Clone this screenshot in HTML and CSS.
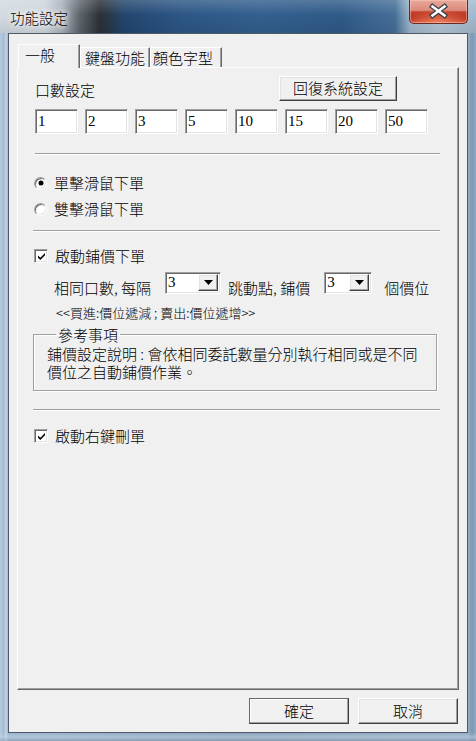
FILE: index.html
```html
<!DOCTYPE html>
<html lang="zh-Hant">
<head>
<meta charset="utf-8">
<title>功能設定</title>
<link rel="stylesheet" href="styles.css">
</head>
<body>
<div class="window">
  <div class="titlebar">
    <span class="title">功能設定</span>
    <div class="close">
      <svg width="59" height="24" viewBox="0 0 59 24">
        <g stroke-linecap="square">
          <path d="M23.5 7.5 L35.5 16.5 M35.5 7.5 L23.5 16.5" stroke="#3a3f48" stroke-width="5"/>
          <path d="M23.5 7.5 L35.5 16.5 M35.5 7.5 L23.5 16.5" stroke="#ffffff" stroke-width="2.6"/>
        </g>
      </svg>
    </div>
  </div>
  <div class="client">
    <div class="tabs">
      <div class="tab active t1">一般</div>
      <div class="tab t2">鍵盤功能</div>
      <div class="tab t3">顏色字型</div>
    </div>
    <div class="panel">
      <div class="row1">
        <span class="lbl">口數設定</span>
        <div class="btn reset">回復系統設定</div>
      </div>
      <div class="inputs">
        <div class="field">1</div>
        <div class="field">2</div>
        <div class="field">3</div>
        <div class="field">5</div>
        <div class="field">10</div>
        <div class="field">15</div>
        <div class="field">20</div>
        <div class="field">50</div>
      </div>
      <div class="sep s1"></div>
      <div class="opt r1"><span class="radio on"></span><span>單擊滑鼠下單</span></div>
      <div class="opt r2"><span class="radio"></span><span>雙擊滑鼠下單</span></div>
      <div class="sep s2"></div>
      <div class="opt c1"><span class="check"><svg width="9" height="9" viewBox="0 0 9 9"><path d="M1 3.5 L3.3 5.8 L8 1.1 L8 3.3 L3.3 8 L1 5.7 Z" fill="#000"/></svg></span><span>啟動鋪價下單</span></div>
      <div class="selrow">
        <span class="txt">相同口數, 每隔</span>
        <div class="select sel1"><span class="val">3</span><span class="arrow"><svg width="9" height="5" viewBox="0 0 9 5"><path d="M0 0 H9 L4.5 5 Z" fill="#000"/></svg></span></div>
        <span class="txt t-b">跳動點, 鋪價</span>
        <div class="select sel2"><span class="val">3</span><span class="arrow"><svg width="9" height="5" viewBox="0 0 9 5"><path d="M0 0 H9 L4.5 5 Z" fill="#000"/></svg></span></div>
        <span class="txt t-c">個價位</span>
      </div>
      <div class="note">&lt;&lt;買進:價位遞減 ; 賣出:價位遞增&gt;&gt;</div>
      <fieldset class="group">
        <legend>參考事項</legend>
        <div class="gline">鋪價設定說明 : 會依相同委託數量分別執行相同或是不同</div>
        <div class="gline">價位之自動鋪價作業。</div>
      </fieldset>
      <div class="sep s3"></div>
      <div class="opt c2"><span class="check"><svg width="9" height="9" viewBox="0 0 9 9"><path d="M1 3.5 L3.3 5.8 L8 1.1 L8 3.3 L3.3 8 L1 5.7 Z" fill="#000"/></svg></span><span>啟動右鍵刪單</span></div>
    </div>
    <div class="buttons">
      <div class="btn ok">確定</div>
      <div class="btn">取消</div>
    </div>
  </div>
</div>
</body>
</html>
```

FILE: styles.css
```css
* { box-sizing: border-box; }
html, body { margin: 0; padding: 0; }
body {
  width: 476px;
  height: 741px;
  overflow: hidden;
  font-family: "Noto Sans CJK TC", "Noto Sans", sans-serif;
  font-weight: 300;
  font-size: 15px;
  color: #000;
  background:
    linear-gradient(to bottom, rgba(255,255,255,0) 0, rgba(255,255,255,0) 733px, rgba(200,215,230,0.5) 737px, rgba(120,140,160,0.4) 741px),
    linear-gradient(to right, #b7cbde 0, #a2bcd3 4px, #c5d6e5 6px, #9db6cd 8px, #8aa2b9 50%, #93acc4 468px, #7f99b3 472px, #8fa8c0 476px);
}
.window {
  display: flex;
  flex-direction: column;
  height: 741px;
}
.titlebar {
  height: 33px;
  flex: none;
  display: flex;
  align-items: flex-start;
  background:
    linear-gradient(to bottom, rgba(255,255,255,0.18) 0, rgba(255,255,255,0) 45%, rgba(0,0,0,0.08) 100%),
    linear-gradient(to right, #d3dae1 0, #cdd5dd 45px, #a7afb7 62px, #5d646c 80px, #2b3036 100px, #23466f 125px, #2c5685 180px, #335f8e 260px, #2f5a88 340px, #456f98 395px, #9fb6cb 410px, #b3c6d7 440px, #a3b8cc 476px);
}
.title {
  margin: 9px 0 0 10px;
  font-size: 14.5px;
  line-height: 18px;
  color: #000;
  text-shadow: 0 0 4px #fff, 0 0 8px #fff, 0 0 10px rgba(255,255,255,0.9);
}
.close {
  margin-left: auto;
  margin-right: 8px;
  width: 59px;
  height: 24px;
  border: 1px solid #6a2a22;
  border-top: none;
  border-radius: 0 0 5px 5px;
  background:
    radial-gradient(ellipse 60% 55% at 50% 100%, rgba(255,150,110,0.75), rgba(255,120,90,0) 100%),
    linear-gradient(to bottom, #e8a99c 0, #dc8a7a 45%, #c4402c 52%, #b8321f 80%, #cc4a30 100%);
  box-shadow: inset 0 0 0 1px rgba(255,210,200,0.45);
}
.close svg { display: block; margin: -1px 0 0 -1px; }

.client {
  flex: 1;
  margin: 0 8px 8px 8px;
  border: 1px solid #4f5a66;
  background: #f0f0f0;
  display: flex;
  flex-direction: column;
}
.tabs {
  display: flex;
  align-items: flex-end;
  margin: 10px 0 0 9px;
  height: 23px;
  position: relative;
  z-index: 1;
}
.tab {
  height: 20px;
  border-top: 1px solid #fff;
  border-left: 1px solid #fff;
  border-right: 1px solid #696969;
  box-shadow: inset -1px 0 #a0a0a0;
  background: #f0f0f0;
  line-height: 19px;
  white-space: nowrap;
}
.tab.active {
  height: 24px;
  margin-bottom: -1px;
  line-height: 20px;
}
.t1 { width: 62px; padding-left: 6px; }
.t2 { width: 70px; padding-left: 4px; }
.t3 { width: 72px; padding-left: 2px; }

.panel {
  margin-left: 8px;
  width: 442px;
  height: 623px;
  border-top: 1px solid #fff;
  border-left: 1px solid #fff;
  border-right: 1px solid #696969;
  border-bottom: 1px solid #696969;
  box-shadow: inset -1px -1px #a0a0a0;
  padding-left: 17px;
  display: flex;
  flex-direction: column;
}
.row1 {
  margin-top: 8px;
  height: 25px;
  display: flex;
  align-items: center;
}
.lbl { width: 244px; line-height: 18px; margin-top: 3px; }

.btn {
  height: 25px;
  border: 1px solid;
  border-color: #fff #404040 #404040 #fff;
  box-shadow: inset -1px -1px #a0a0a0, inset 1px 1px #e3e3e3;
  background: #f0f0f0;
  text-align: center;
  line-height: 22px;
}
.reset { width: 118px; }

.inputs {
  margin-top: 8px;
  display: flex;
  gap: 7px;
}
.field {
  width: 43px;
  height: 25px;
  background: #fff;
  border: 1px solid;
  border-color: #a0a0a0 #fff #fff #a0a0a0;
  box-shadow: inset 1px 1px #696969, inset -1px -1px #e3e3e3;
  padding-left: 2px;
  font-family: "Liberation Serif", serif;
  font-weight: 400;
  font-size: 15px;
  line-height: 23px;
}

.sep {
  height: 2px;
  width: 405px;
  border-top: 1px solid #a0a0a0;
  border-bottom: 1px solid #fff;
}
.s1 { margin-top: 19px; }
.s2 { margin-top: 12px; margin-left: -2px; width: 407px; }
.s3 { margin-top: 18px; margin-left: -2px; width: 407px; }

.opt {
  height: 18px;
  display: flex;
  align-items: center;
  line-height: 18px;
}
.r1 { margin-top: 19px; }
.r2 { margin-top: 8px; }
.c1 { margin-top: 15px; }
.c2 { margin-top: 16px; }

.radio {
  width: 13px;
  height: 13px;
  margin-left: -1px;
  margin-right: 7px;
  border-radius: 50%;
  border: 1px solid;
  border-color: #a0a0a0 #fff #fff #a0a0a0;
  box-shadow: inset 1px 1px #696969, inset -1px -1px #e3e3e3;
  background: #fff;
  display: flex;
  align-items: center;
  justify-content: center;
}
.radio.on::after {
  content: "";
  width: 4px;
  height: 4px;
  border-radius: 50%;
  background: #000;
  box-shadow: 0 0 0 0.5px #000;
}
.check {
  width: 14px;
  height: 14px;
  margin-left: -1px;
  margin-right: 7px;
  border: 1px solid;
  border-color: #a0a0a0 #fff #fff #a0a0a0;
  box-shadow: inset 1px 1px #696969, inset -1px -1px #e3e3e3;
  background: #fff;
  display: flex;
  align-items: center;
  justify-content: center;
}
.check svg { display: block; }

.selrow {
  margin-top: 7px;
  padding-left: 19px;
  height: 23px;
  display: flex;
  align-items: flex-end;
}
.txt { line-height: 18px; margin-bottom: -2px; white-space: nowrap; }
.select {
  height: 22px;
  background: #fff;
  border: 1px solid;
  border-color: #a0a0a0 #fff #fff #a0a0a0;
  box-shadow: inset 1px 1px #696969, inset -1px -1px #e3e3e3;
  display: flex;
  justify-content: space-between;
  padding: 2px 2px 2px 2px;
}
.sel1 { width: 56px; margin-left: 14px; align-self: flex-start; }
.sel2 { width: 48px; margin-left: 14px; align-self: flex-start; }
.t-b { margin-left: 7px; }
.t-c { margin-left: 12px; }
.val {
  font-family: "Liberation Serif", serif;
  font-weight: 400;
  font-size: 15px;
  line-height: 17px;
  margin-top: -1px;
}
.arrow {
  width: 20px;
  height: 17px;
  margin-top: -1px;
  border: 1px solid;
  border-color: #fff #404040 #404040 #fff;
  box-shadow: inset -1px -1px #a0a0a0, inset 1px 1px #e3e3e3;
  background: #f0f0f0;
  display: flex;
  align-items: center;
  justify-content: center;
}
.arrow svg { display: block; }

.note {
  margin-top: 10px;
  padding-left: 21px;
  font-size: 13px;
  line-height: 16px;
}

.group {
  margin: 5px 0 0 -2px;
  width: 404px;
  border: 1px solid #a0a0a0;
  box-shadow: inset 1px 1px #fff, 1px 1px 0 #fff;
  padding: 2px 10px 9px 13px;
  min-width: 0;
}
.group legend {
  margin-left: 9px;
  padding: 0 2px;
  line-height: 17px;
  font-size: 15px;
}
.gline {
  line-height: 18px;
  white-space: nowrap;
}

.buttons {
  display: flex;
  justify-content: flex-end;
  gap: 9px;
  margin: 8px 9px 0 0;
}
.buttons .btn { width: 100px; height: 26px; line-height: 23px; }
.btn.ok {
  border-color: #696969 #404040 #404040 #696969;
  box-shadow: inset -1px -1px #a0a0a0, inset 1px 1px #fff;
}
```
